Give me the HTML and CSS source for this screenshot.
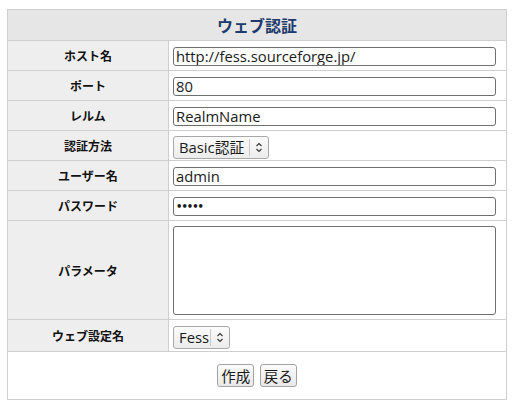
FILE: index.html
```html
<!DOCTYPE html>
<html lang="ja">
<head>
<meta charset="utf-8">
<title>ウェブ認証</title>
<link rel="stylesheet" href="styles.css">
</head>
<body>
<table class="form-table">
  <thead>
    <tr><th class="title" colspan="2">ウェブ認証</th></tr>
  </thead>
  <tbody>
    <tr class="row">
      <th class="label">ホスト名</th>
      <td class="value"><input class="text" type="text" value="http://fess.sourceforge.jp/"></td>
    </tr>
    <tr class="row">
      <th class="label">ポート</th>
      <td class="value"><input class="text" type="text" value="80"></td>
    </tr>
    <tr class="row">
      <th class="label">レルム</th>
      <td class="value"><input class="text" type="text" value="RealmName"></td>
    </tr>
    <tr class="row">
      <th class="label">認証方法</th>
      <td class="value">
        <span class="select select-auth">
          <span class="select-text">Basic認証</span>
          <span class="select-sep"></span>
          <svg class="select-arrow" width="8" height="11" viewBox="0 0 8 11"><path d="M1.5 4 L4 1.5 L6.5 4 M1.5 7 L4 9.5 L6.5 7" fill="none" stroke="#333" stroke-width="1.1"/></svg>
        </span>
      </td>
    </tr>
    <tr class="row">
      <th class="label">ユーザー名</th>
      <td class="value"><input class="text" type="text" value="admin"></td>
    </tr>
    <tr class="row">
      <th class="label">パスワード</th>
      <td class="value"><input class="text pass" type="password" value="admin"></td>
    </tr>
    <tr class="row-tall">
      <th class="label">パラメータ</th>
      <td class="value"><textarea class="area"></textarea></td>
    </tr>
    <tr class="row-select">
      <th class="label">ウェブ設定名</th>
      <td class="value">
        <span class="select select-fess">
          <span class="select-text">Fess</span>
          <span class="select-sep"></span>
          <svg class="select-arrow" width="8" height="11" viewBox="0 0 8 11"><path d="M1.5 4 L4 1.5 L6.5 4 M1.5 7 L4 9.5 L6.5 7" fill="none" stroke="#333" stroke-width="1.1"/></svg>
        </span>
      </td>
    </tr>
    <tr class="row-buttons">
      <td class="buttons" colspan="2">
        <button class="btn" type="button">作成</button>
        <button class="btn" type="button">戻る</button>
      </td>
    </tr>
  </tbody>
</table>
</body>
</html>
```
FILE: styles.css
```css
html, body {
  background: #ffffff;
}
body {
  margin: 9px 0 0 7px;
  font-family: "Noto Sans CJK JP", "Open Sans", sans-serif;
  color: #222;
}
.form-table {
  border-collapse: separate;
  border-spacing: 0;
  width: 500px;
  border-top: 1px solid #cfcfcf;
  border-left: 1px solid #cfcfcf;
}
.form-table th,
.form-table td {
  border-right: 1px solid #cfcfcf;
  border-bottom: 1px solid #cfcfcf;
  padding: 0;
}
.title {
  height: 30px;
  background: #e6e6e6;
  color: #1d3b6b;
  font-size: 16px;
  font-weight: bold;
  text-align: center;
  vertical-align: middle;
  line-height: 20px;
}
.label {
  width: 160px;
  background: #eeeeee;
  font-size: 12px;
  font-weight: bold;
  color: #111;
  text-align: center;
  vertical-align: middle;
}
.value {
  padding: 0 0 0 4px !important;
  vertical-align: middle;
  background: #fff;
}
.row .label, .row .value {
  height: 29px;
}
.row-tall .label, .row-tall .value {
  height: 98px;
}
.row-select .label, .row-select .value {
  height: 31px;
}
.text {
  display: block;
  box-sizing: border-box;
  width: 323px;
  height: 19px;
  margin: 1px 0 0 0;
  padding: 0 2px;
  border: 1px solid #6f6f6f;
  border-radius: 3px;
  font-family: "Open Sans", "Noto Sans CJK JP", sans-serif;
  font-size: 14.8px;
  color: #1a1a1a;
  background: #fff;
  outline: none;
}
.pass {
  font-family: "DejaVu Sans", sans-serif;
  font-size: 10px;
  font-weight: bold;
  letter-spacing: -1px;
}
.area {
  display: block;
  box-sizing: border-box;
  width: 323px;
  height: 89px;
  margin: 1px 0 0 0;
  padding: 2px;
  border: 1px solid #6f6f6f;
  border-radius: 3px;
  resize: none;
  background: #fff;
}
.select {
  display: inline-flex;
  align-items: center;
  box-sizing: border-box;
  height: 23px;
  border: 1px solid #a8a8a8;
  border-radius: 3px;
  background: linear-gradient(#fbfbfb, #ececec);
  font-family: "Open Sans", "Noto Sans CJK JP", sans-serif;
  font-size: 14.8px;
  color: #1a1a1a;
  vertical-align: middle;
  padding-left: 5px;
}
.select-auth {
  width: 96px;
}
.select-text {
  line-height: 21px;
  white-space: nowrap;
}
.select-sep {
  flex: none;
  width: 1px;
  height: 17px;
  background: #c8c8c8;
  margin-left: auto;
}
.select-fess .select-sep {
  margin-left: 1px;
}
.select-arrow {
  flex: none;
  margin: 0 5px 0 5px;
}
.buttons {
  height: 45px;
  text-align: center;
  vertical-align: middle;
  padding: 0 0 2px 0 !important;
}
.btn {
  box-sizing: border-box;
  height: 23px;
  padding: 0 3px;
  margin: 0 1px;
  border: 1px solid #a3a3a3;
  border-radius: 3px;
  background: linear-gradient(#fbfbfb, #e9e9e9);
  font-family: "Noto Sans CJK JP", sans-serif;
  font-size: 14.5px;
  line-height: 19px;
  color: #1a1a1a;
}
```
